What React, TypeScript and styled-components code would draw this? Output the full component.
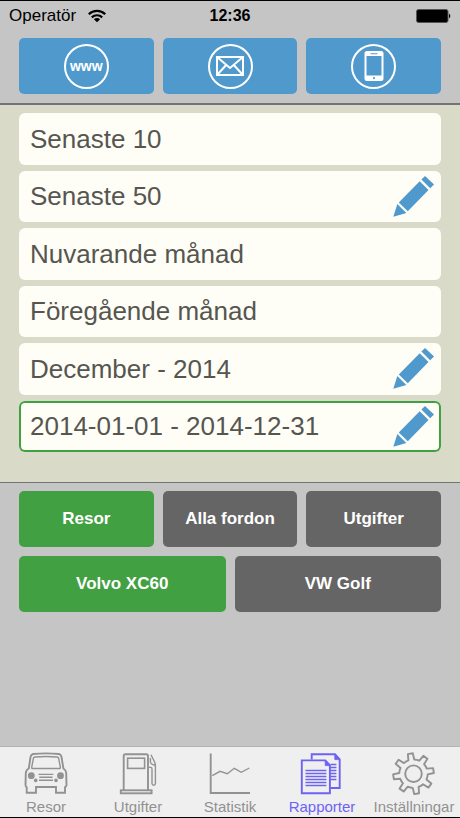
import React, { useState } from "react";
import styled, { createGlobalStyle } from "styled-components";

const color = {
  chrome: "#c5c5c6",
  sand: "#dadac9",
  paper: "#fefef6",
  blue: "#5099cd",
  green: "#41a041",
  slate: "#656565",
  ink: "#565651",
  line: "#747474",
  bar: "#efefef",
  muted: "#929292",
  accent: "#6c63f5",
};

const GlobalStyle = createGlobalStyle`
  *, *::before, *::after { box-sizing: border-box; }
  body {
    margin: 0;
    font-family: "Liberation Sans", Arial, Helvetica, sans-serif;
  }
  button { font: inherit; border: 0; padding: 0; margin: 0; cursor: pointer; }
  svg { display: block; }
`;

const Screen = styled.div`
  min-height: 100vh;
  display: flex;
  flex-direction: column;
  background: ${color.chrome};
  border-top: 1px solid #000;
  border-bottom: 1px solid #000;
`;

const StatusBar = styled.header`
  display: grid;
  grid-template-columns: 1fr auto 1fr;
  align-items: center;
  height: 30px;
  padding: 0 9px;
  font-size: 17px;
  line-height: 20px;
  color: #000;
`;

const Carrier = styled.div`
  display: flex;
  align-items: center;
  gap: 12px;
`;

const Clock = styled.time`
  font-size: 16px;
  font-weight: 700;
`;

const BatterySlot = styled.div`
  justify-self: end;
`;

const Toolbar = styled.div`
  display: flex;
  gap: 9px;
  padding: 7px 19px 9px;
`;

const ShareButton = styled.button`
  flex: 1 1 0;
  height: 56px;
  display: flex;
  align-items: center;
  justify-content: center;
  border-radius: 5px;
  background: ${color.blue};
  color: #fff;
`;

const Ring = styled.span`
  width: 45px;
  height: 45px;
  display: flex;
  align-items: center;
  justify-content: center;
  border: 2px solid currentColor;
  border-radius: 50%;
  font-size: 14px;
  font-weight: 700;
  line-height: 16px;
`;

const PeriodList = styled.ul`
  list-style: none;
  margin: 0;
  padding: 8px 19px 30px;
  display: grid;
  grid-auto-rows: 1fr;
  gap: 6px;
  min-height: 380px;
  background: ${color.sand};
  border-top: 2px solid ${color.line};
  border-bottom: 1px solid ${color.line};
`;

const PeriodRow = styled.li<{ $selected: boolean }>`
  display: flex;
  align-items: stretch;
  border-radius: 6px;
  background: ${color.paper};
  box-shadow: ${(p) => (p.$selected ? `inset 0 0 0 2px ${color.green}` : "none")};
`;

const PeriodButton = styled.button`
  flex: 1;
  padding-left: 11px;
  background: transparent;
  text-align: left;
  font-size: 26px;
  line-height: 32px;
  color: ${color.ink};
`;

const EditButton = styled.button`
  display: flex;
  align-items: center;
  padding-right: 7px;
  background: transparent;
  color: ${color.blue};
`;

const Filters = styled.div`
  display: flex;
  flex-direction: column;
  gap: 9px;
  padding: 8px 19px 16px;
`;

const FilterRow = styled.div`
  display: flex;
  gap: 9px;
`;

const FilterButton = styled.button<{ $active: boolean }>`
  flex: 1 1 0;
  height: 56px;
  border-radius: 5px;
  background: ${(p) => (p.$active ? color.green : color.slate)};
  color: #fff;
  font-size: 17px;
  font-weight: 700;
  line-height: 20px;
`;

const TabBar = styled.nav`
  margin-top: auto;
  display: grid;
  grid-template-columns: repeat(5, 1fr);
  background: ${color.bar};
  border-top: 1px solid #b4b4b4;
`;

const Tab = styled.button<{ $active: boolean }>`
  display: flex;
  flex-direction: column;
  align-items: center;
  gap: 3px;
  padding: 5px 0 1px;
  background: transparent;
  color: ${(p) => (p.$active ? color.accent : color.muted)};
  font-size: 15px;
  line-height: 18px;
`;

const WifiIcon = () => (
  <svg width="18" height="14" viewBox="0 0 18 14" fill="none" stroke="#000" strokeWidth="2.2" aria-hidden="true">
    <path d="M0.8 5.3 A11.6 11.6 0 0 1 17.2 5.3" />
    <path d="M3.8 8.4 A7.4 7.4 0 0 1 14.2 8.4" />
    <path d="M9 13.2 L5.9 10.2 A4.4 4.4 0 0 1 12.1 10.2 Z" fill="#000" stroke="none" />
  </svg>
);

const BatteryIcon = () => (
  <svg width="35" height="14" viewBox="0 0 35 14" aria-label="Batteri" role="img">
    <rect x="0.5" y="0.5" width="31.5" height="13" rx="2" fill="#000" stroke="#555" />
    <path d="M33 4.5 Q35.6 7 33 9.5 Z" fill="#000" />
  </svg>
);

const MailIcon = () => (
  <svg width="28" height="20" viewBox="0 0 28 20" fill="none" stroke="#fff" strokeWidth="2" aria-hidden="true">
    <rect x="1" y="1" width="26" height="18" />
    <path d="M1 1 L14 12 L27 1 M1 19 L10.2 9 M27 19 L17.8 9" />
  </svg>
);

const PhoneIcon = () => (
  <svg width="20" height="30" viewBox="0 0 20 30" aria-hidden="true">
    <path
      fill="#fff"
      fillRule="evenodd"
      d="M3 0 H17 Q19.5 0 19.5 2.5 V27.5 Q19.5 30 17 30 H3 Q0.5 30 0.5 27.5 V2.5 Q0.5 0 3 0 Z M2.5 5 V24.5 H17.5 V5 Z M6.5 2.2 V3.2 H13.5 V2.2 Z M10 26 A1.1 1.1 0 1 0 10 28.2 A1.1 1.1 0 1 0 10 26 Z"
    />
  </svg>
);

const PencilIcon = () => (
  <svg width="41" height="41" viewBox="0 0 41 41" fill="currentColor" aria-hidden="true">
    <path d="M0.3 40.7 L4.3 28 L13.4 36.9 Z" />
    <path d="M5.8 26.5 L26.7 5.3 L35.5 14 L14.8 35.2 Z" />
    <path d="M28.4 3.6 L32 0 L41 8.6 L37.2 12.3 Z" />
  </svg>
);

const TabIcon = ({ children }: { children: React.ReactNode }) => (
  <svg width="44" height="43" viewBox="0 0 44 43" fill="none" stroke="currentColor" strokeWidth="1.9" aria-hidden="true">
    {children}
  </svg>
);

const CarIcon = () => (
  <TabIcon>
    <path d="M9 2 Q22 0.8 35 2 Q37 2.4 37.5 5 L39.4 16.5 Q42 18 42.2 21 L42.5 33 Q42.2 35 41 35.2 V40.7 H32 V35 H12 V40.7 H2.7 V35.2 Q1.6 35 1.5 33 L1.8 21 Q2 18 4.8 16.5 L6.5 5 Q7 2.4 9 2 Z" />
    <path d="M11 5 Q22 4 33 5 Q34.4 5.2 34.6 6.2 L36.4 15.4 Q36.5 16.5 35.4 16.5 H8.6 Q7.5 16.5 7.7 15.4 L9.4 6.2 Q9.6 5.2 11 5 Z" strokeWidth="1.4" />
    <g fill="currentColor" stroke="none">
      <circle cx="7.3" cy="23.7" r="3.4" />
      <circle cx="36.5" cy="23.7" r="3.4" />
      <circle cx="11.7" cy="28.4" r="1.8" />
      <circle cx="32" cy="28.4" r="1.8" />
    </g>
    <path d="M14.5 22.4 H29.3 M15.3 25.3 H28.5 M15 28.2 H29" strokeWidth="1.4" />
  </TabIcon>
);

const PumpIcon = () => (
  <TabIcon>
    <path d="M7.7 38.3 V4 Q7.7 2.3 9.4 2.3 H30.3 Q32 2.3 32 4 V38.3" />
    <rect x="4.8" y="38.3" width="30.8" height="3" />
    <rect x="11.6" y="6.2" width="17" height="10.2" strokeWidth="1.6" />
    <path
      d="M32.2 15.4 H34.6 Q36 15.4 36 17 V31.5 Q36.2 33.2 37.7 33.2 Q39.4 33.2 39.4 31.5 V13.5 Q39.4 11.8 38.6 10 L35 2.8 M34.4 6 V10 Q34.6 11.4 36 12.2 L38.8 13.4"
      strokeWidth="1.4"
    />
  </TabIcon>
);

const ChartIcon = () => (
  <TabIcon>
    <path d="M2.7 1.6 V41 H42" />
    <path d="M4.3 23.7 L12 19.3 L19.3 21.7 L26.3 16.3 L33.3 20.3 L41.3 16" strokeWidth="1.4" />
  </TabIcon>
);

const ReportsIcon = () => (
  <TabIcon>
    <path d="M11.7 7.6 V2.3 H35 L39.7 7.4 V36 H30.4" />
    <path d="M1.8 8.4 H25.4 L29.9 13.4 V41.3 H1.8 Z" />
    <path d="M25.2 8.4 V13.6 H29.9 Z M34.8 2.3 V7.6 H39.7 Z" fill="currentColor" strokeWidth="0.8" />
    <path
      d="M5.5 18.5 H26.4 M5.5 21.5 H26.4 M5.5 24.5 H26.4 M5.5 27.5 H26.4 M5.5 30.5 H26.4 M5.5 33.5 H26.4 M30.4 12.5 H36.4 M30.4 15.5 H36.4 M30.4 18.5 H36.4 M30.4 21.5 H36.4 M30.4 24.5 H36.4 M30.4 27.5 H36.4"
      strokeWidth="1.3"
    />
  </TabIcon>
);

const gearOutline = () => {
  const point = (radius: number, degrees: number) => {
    const a = (degrees * Math.PI) / 180;
    return `${(21.5 + radius * Math.cos(a)).toFixed(2)} ${(21.7 + radius * Math.sin(a)).toFixed(2)}`;
  };
  const parts: string[] = [];
  for (let tooth = 0; tooth < 8; tooth++) {
    const mid = -99 + tooth * 45;
    parts.push(
      `${tooth === 0 ? "M" : "A14.2 14.2 0 0 1 "}${point(14.2, mid - 12)}`,
      `L${point(20.4, mid - 7)}`,
      `L${point(20.4, mid + 7)}`,
      `L${point(14.2, mid + 12)}`
    );
  }
  return `${parts.join(" ")} A14.2 14.2 0 0 1 ${point(14.2, -111)} Z`;
};

const GearIcon = () => (
  <TabIcon>
    <path d={gearOutline()} strokeLinejoin="round" />
    <circle cx="21.5" cy="21.7" r="8.3" />
  </TabIcon>
);

const periods = [
  { label: "Senaste 10", editable: false },
  { label: "Senaste 50", editable: true },
  { label: "Nuvarande månad", editable: false },
  { label: "Föregående månad", editable: false },
  { label: "December - 2014", editable: true },
  { label: "2014-01-01 - 2014-12-31", editable: true },
];

const tabs = [
  { label: "Resor", Icon: CarIcon },
  { label: "Utgifter", Icon: PumpIcon },
  { label: "Statistik", Icon: ChartIcon },
  { label: "Rapporter", Icon: ReportsIcon },
  { label: "Inställningar", Icon: GearIcon },
];

const reportKinds = ["Resor", "Alla fordon", "Utgifter"];
const vehicles = ["Volvo XC60", "VW Golf"];

export default function App() {
  const [period, setPeriod] = useState(5);
  const [kind, setKind] = useState("Resor");
  const [vehicle, setVehicle] = useState("Volvo XC60");
  const [tab, setTab] = useState("Rapporter");

  return (
    <>
      <GlobalStyle />
      <Screen>
        <StatusBar>
          <Carrier>
            Operatör
            <WifiIcon />
          </Carrier>
          <Clock>12:36</Clock>
          <BatterySlot>
            <BatteryIcon />
          </BatterySlot>
        </StatusBar>

        <Toolbar>
          <ShareButton type="button">
            <Ring>www</Ring>
          </ShareButton>
          <ShareButton type="button" aria-label="E-post">
            <Ring>
              <MailIcon />
            </Ring>
          </ShareButton>
          <ShareButton type="button" aria-label="Telefon">
            <Ring>
              <PhoneIcon />
            </Ring>
          </ShareButton>
        </Toolbar>

        <PeriodList>
          {periods.map((p, i) => (
            <PeriodRow key={p.label} $selected={i === period}>
              <PeriodButton type="button" aria-pressed={i === period} onClick={() => setPeriod(i)}>
                {p.label}
              </PeriodButton>
              {p.editable && (
                <EditButton type="button" aria-label={`Redigera ${p.label}`}>
                  <PencilIcon />
                </EditButton>
              )}
            </PeriodRow>
          ))}
        </PeriodList>

        <Filters>
          <FilterRow>
            {reportKinds.map((k) => (
              <FilterButton key={k} type="button" $active={k === kind} aria-pressed={k === kind} onClick={() => setKind(k)}>
                {k}
              </FilterButton>
            ))}
          </FilterRow>
          <FilterRow>
            {vehicles.map((v) => (
              <FilterButton key={v} type="button" $active={v === vehicle} aria-pressed={v === vehicle} onClick={() => setVehicle(v)}>
                {v}
              </FilterButton>
            ))}
          </FilterRow>
        </Filters>

        <TabBar>
          {tabs.map(({ label, Icon }) => (
            <Tab
              key={label}
              type="button"
              $active={label === tab}
              aria-current={label === tab ? "page" : undefined}
              onClick={() => setTab(label)}
            >
              <Icon />
              {label}
            </Tab>
          ))}
        </TabBar>
      </Screen>
    </>
  );
}
